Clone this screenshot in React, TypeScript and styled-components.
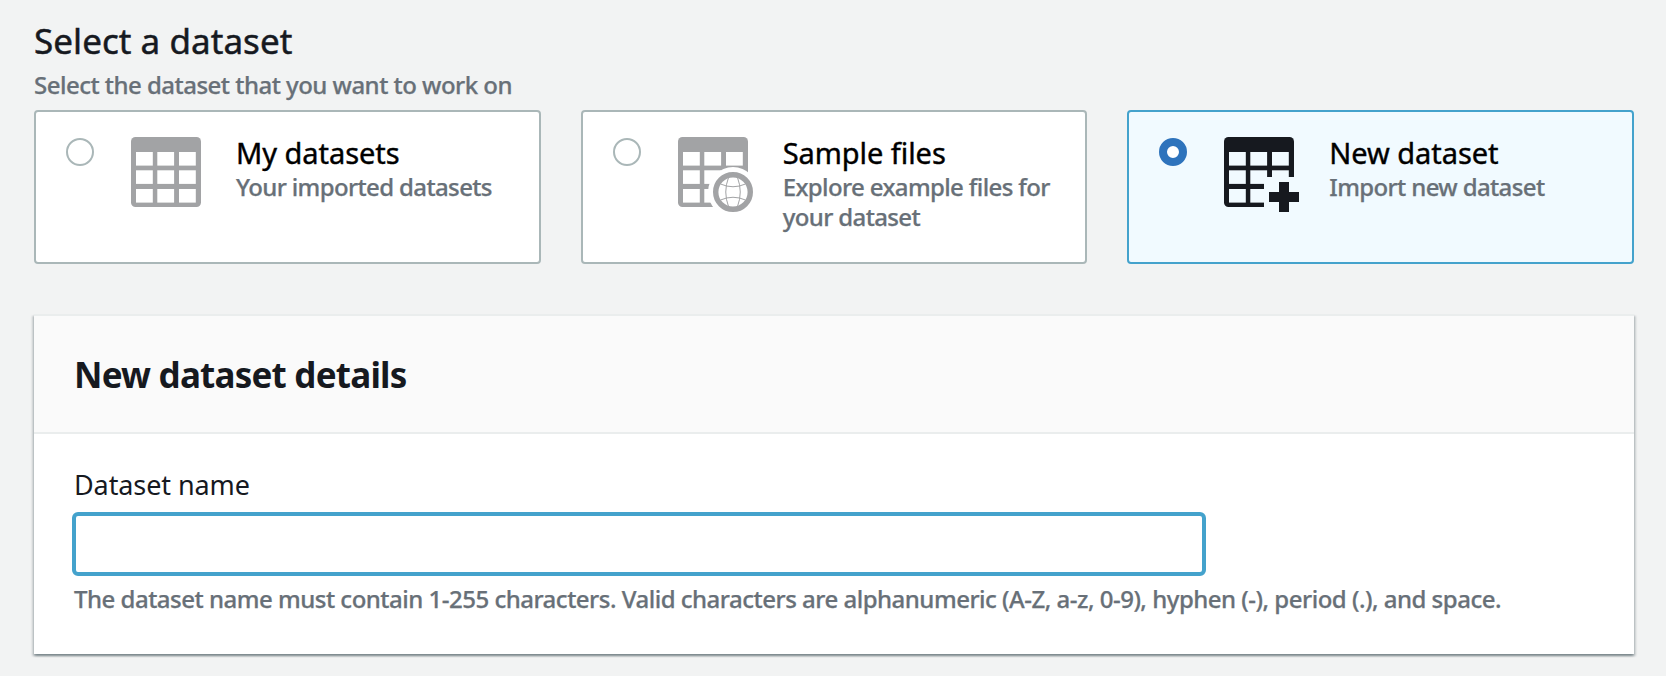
import React, { useState } from 'react';
import styled, { createGlobalStyle } from 'styled-components';

const GlobalStyle = createGlobalStyle`
  * { box-sizing: border-box; }
  body {
    margin: 0;
    background: #f2f3f3;
    color: #16191f;
    font-family: 'Noto Sans', 'Open Sans', sans-serif;
  }
`;

const Page = styled.main`
  min-height: 676px;
  padding: 19px 32px 22px 34px;
`;

const Title = styled.h1`
  margin: 0 0 7px;
  font-size: 35px;
  line-height: 44px;
  font-weight: 400;
  letter-spacing: 0.05px;
  -webkit-text-stroke: 0.5px currentColor;
`;

const Hint = styled.p`
  margin: 0;
  color: #687078;
  font-size: 24px;
  line-height: 30px;
  font-weight: 500;
  letter-spacing: -0.52px;
  -webkit-text-stroke: 0.25px currentColor;
`;

const Tiles = styled.div`
  display: grid;
  grid-template-columns: repeat(3, 1fr);
  gap: 40px;
  margin-top: 10px;
`;

const Tile = styled.button<{ $selected: boolean }>`
  display: flex;
  align-items: flex-start;
  height: 154px;
  padding: 23px 28px 0;
  border: 2px solid ${p => (p.$selected ? '#44a2cc' : '#aab7b8')};
  border-radius: 4px;
  background: ${p => (p.$selected ? '#f1faff' : '#ffffff')};
  font-family: inherit;
  text-align: left;
  cursor: pointer;
`;

const Radio = styled.span<{ $selected: boolean }>`
  flex: none;
  width: 28px;
  height: 28px;
  margin: 3px 37px 0 2px;
  border: ${p => (p.$selected ? '8px solid #2e73bc' : '2px solid #aab7b8')};
  border-radius: 50%;
  background: #ffffff;
`;

const TileIcon = styled.svg`
  flex: none;
  width: 76px;
  height: 76px;
  margin: 2px 29px 0 0;
`;

const TileText = styled.span`
  display: flex;
  flex-direction: column;
  gap: 1px;
`;

const TileTitle = styled.span`
  color: #000000;
  font-size: 29px;
  line-height: 36px;
  letter-spacing: -0.05px;
  -webkit-text-stroke: 0.4px currentColor;
`;

const TileHint = styled(Hint).attrs({ as: 'span' })`
  letter-spacing: -0.63px;
`;

const Panel = styled.section`
  margin-top: 50px;
  border-top: 2px solid #eaeded;
  background: #ffffff;
  box-shadow: 0 2px 2px rgba(0, 28, 36, 0.3), 2px 2px 2px rgba(0, 28, 36, 0.15),
    -2px 2px 2px rgba(0, 28, 36, 0.15);
`;

const PanelHeader = styled.header`
  padding: 37px 40px 35px;
  border-bottom: 2px solid #eaeded;
  background: #fafafa;
`;

const PanelTitle = styled.h2`
  margin: 0;
  font-size: 35px;
  line-height: 44px;
  font-weight: 700;
  letter-spacing: -0.78px;
`;

const PanelBody = styled.div`
  padding: 34px 38px 40px;
`;

const Label = styled.label`
  display: block;
  margin: 0 2px 10px;
  font-size: 27px;
  line-height: 34px;
  letter-spacing: -0.1px;
`;

const NameInput = styled.input`
  display: block;
  width: 1134px;
  height: 64px;
  margin-bottom: 8px;
  padding: 0 20px;
  border: 4px solid #44a2cc;
  border-radius: 6px;
  outline: none;
  background: #ffffff;
  font: inherit;
  font-size: 27px;
`;

const FieldHint = styled(Hint)`
  margin: 0 2px;
  letter-spacing: -0.5px;
  white-space: nowrap;
`;

type Kind = 'table' | 'globe' | 'plus';

const columns = [5, 26.3, 48];
const rows = [15, 33.3, 52];

function DatasetIcon({ kind }: { kind: Kind }) {
  const color = kind === 'plus' ? '#16191f' : '#a2a3a5';
  return (
    <TileIcon viewBox="0 0 76 76" aria-hidden="true">
      <mask id={`cut-${kind}`}>
        <rect width="76" height="76" fill="white" />
        {columns.map(x =>
          rows.map(y => <rect key={`${x}-${y}`} x={x} y={y} width="16.8" height="13.6" fill="black" />)
        )}
        {kind === 'globe' && <circle cx="55" cy="55" r="25" fill="black" />}
        {kind === 'plus' && <rect x="40" y="40" width="36" height="36" fill="black" />}
      </mask>
      <rect width="70" height="70" rx="4.5" fill={color} mask={`url(#cut-${kind})`} />
      {kind === 'globe' && (
        <g fill="none" stroke={color}>
          <circle cx="55" cy="55" r="17.3" strokeWidth="5.4" />
          <path
            strokeWidth="1"
            d="M50.5 40.5Q45 55 50.5 69.5M59.5 40.5Q65 55 59.5 69.5M42.5 47Q55 52.5 67.5 47M42.5 63Q55 57.5 67.5 63"
          />
        </g>
      )}
      {kind === 'plus' && <path fill={color} d="M55 45h10v10h10v10H65v10H55V65H45V55h10z" />}
    </TileIcon>
  );
}

const options: { kind: Kind; title: string; hint: string }[] = [
  { kind: 'table', title: 'My datasets', hint: 'Your imported datasets' },
  { kind: 'globe', title: 'Sample files', hint: 'Explore example files for your dataset' },
  { kind: 'plus', title: 'New dataset', hint: 'Import new dataset' },
];

export default function App() {
  const [selected, setSelected] = useState<Kind>('plus');
  return (
    <>
      <GlobalStyle />
      <Page>
        <Title>Select a dataset</Title>
        <Hint>Select the dataset that you want to work on</Hint>
        <Tiles role="radiogroup">
          {options.map(o => (
            <Tile
              key={o.kind}
              type="button"
              role="radio"
              aria-checked={selected === o.kind}
              $selected={selected === o.kind}
              onClick={() => setSelected(o.kind)}
            >
              <Radio $selected={selected === o.kind} />
              <DatasetIcon kind={o.kind} />
              <TileText>
                <TileTitle>{o.title}</TileTitle>
                <TileHint>{o.hint}</TileHint>
              </TileText>
            </Tile>
          ))}
        </Tiles>
        <Panel>
          <PanelHeader>
            <PanelTitle>New dataset details</PanelTitle>
          </PanelHeader>
          <PanelBody>
            <Label htmlFor="dataset-name">Dataset name</Label>
            <NameInput id="dataset-name" />
            <FieldHint>
              The dataset name must contain 1-255 characters. Valid characters are alphanumeric (A-Z, a-z, 0-9), hyphen
              (-), period (.), and space.
            </FieldHint>
          </PanelBody>
        </Panel>
      </Page>
    </>
  );
}
